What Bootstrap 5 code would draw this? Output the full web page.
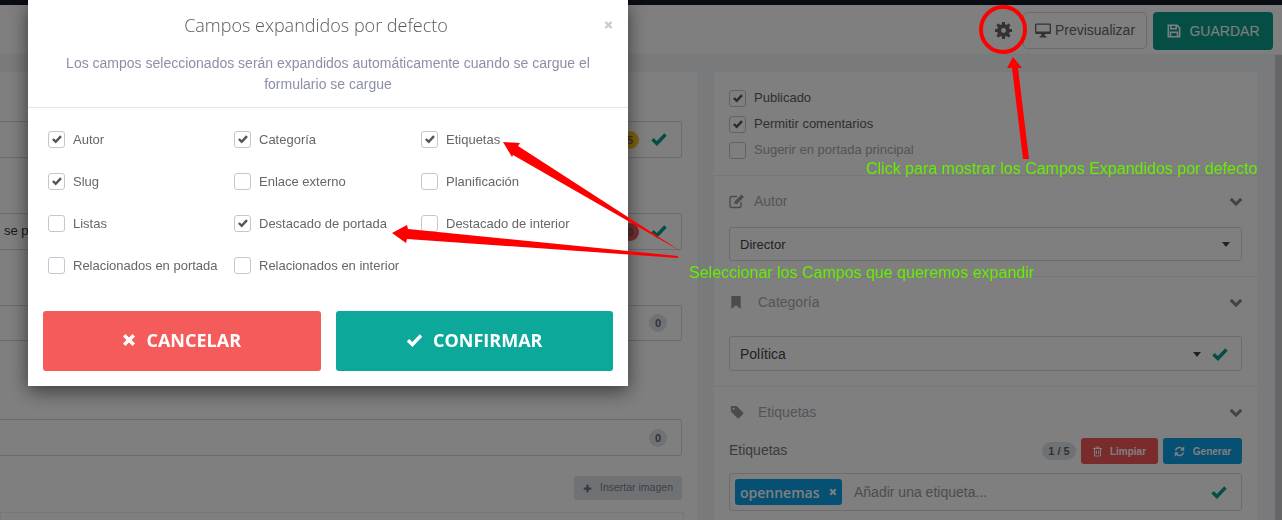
<!DOCTYPE html>
<html lang="es">
<head>
    <meta charset="UTF-8">
    <meta name="viewport" content="width=device-width, initial-scale=1.0">
    <title>Campos expandidos por defecto</title>
    <link rel="stylesheet" href="https://cdn.jsdelivr.net/npm/bootstrap@5.3.3/dist/css/bootstrap.min.css">
    <style>
        html, body { height: 100%; overflow: hidden; }
        body { font-family: "Liberation Sans", Arial, sans-serif; font-size: 13px; color: #5e5e5e; background: #fff; }

        .franja-top { height: 5px; background: #141a28; }
        .cabecera { height: 50px; padding: 7px 9px 5px 0; background: #fff; border-bottom: 1px solid #f0f0f0; }
        .btn-engranaje { width: 24px; margin-right: 8px; color: #666; }
        .btn-previa { width: 124px; height: 37px; margin-right: 6px; padding: 0; font-size: 14px; color: #666; border: 1px solid #d8d8d8; border-radius: 4px; background: #fff; }
        .btn-guardar { width: 120px; height: 38px; padding: 0 0 0 1px; font-size: 14px; color: #fff; background: #0a9c8d; border: 0; border-radius: 4px; }

        .zona { height: 465px; overflow: hidden; }
        .contenido { padding-top: 17px; background: #f0f4f8; }
        .barra-scroll { width: 7px; background: #cdcdcd; }

        .panel-izq { width: 697px; height: 500px; padding: 49px 15px 0 0; margin-right: 17px; background: #fff; }
        .caja { height: 37px; padding: 0 14px 0 4px; color: #333; border: 1px solid #d5d8dc; border-left: 0; border-radius: 0 3px 3px 0; }
        .caja + .caja { margin-top: 55px; }
        .caja.sep-grande { margin-top: 78px; }
        .contador { width: 18px; height: 18px; margin-top: 1px; font-size: 11px; font-weight: 700; line-height: 18px; text-align: center; color: #666; background: #dfe4ea; border-radius: 50%; }
        .cont-amarillo { margin-right: 12px; background: #fac420; }
        .cont-rojo { margin-right: 12px; background: #f55b5b; }
        .ok-verde { color: #0a9c8d; }
        .btn-insertar { width: 108px; height: 24px; margin: 20px 0 12px auto; padding: 0; font-size: 10.5px; color: #7a8088; background: #dfe4ea; border: 0; border-radius: 3px; }
        .caja-baja { height: 60px; margin-right: -2px; border: 1px solid #eee; }

        .panel-der { width: 543px; height: 500px; background: #fff; }
        .bloque { padding: 12px 15px 15px; border-bottom: 1px solid #eee; }
        .bloque-checks { padding-top: 13px; padding-bottom: 12px; }
        .fila-check { height: 26px; font-size: 13px; margin: 0; padding: 0; min-height: 0; }
        .fila-check .form-check-label { margin-left: 8px; }
        .texto-apagado { color: #a8a8a8; }
        .cab-bloque { height: 26px; font-size: 14px; color: #a6aab4; }
        .titulo-bloque { width: 25px; color: #999; }
        .titulo-ancho { width: 29px; padding-left: 1px; }
        .chevron { color: #888; margin-right: -1px; }
        .selector { height: 34px; padding: 1px 11px 0 10px; color: #444; border: 1px solid #d5d8dc; border-radius: 3px; margin-top: 13px; }
        .selector-grande { height: 35px; margin-top: 21px; padding-right: 13px; font-size: 14px; }
        .selector-grande .punta { margin-right: 11px; }
        .fila-etiquetas { height: 26px; margin-top: 13px; font-size: 14px; color: #777; }
        .fila-etiquetas .nombre-campo { padding-bottom: 2px; }
        .cuenta { width: 34px; height: 18px; margin-right: 5px; font-size: 11px; font-weight: 700; line-height: 18px; text-align: center; color: #666; background: #dfe4ea; border-radius: 9px; }
        .btn-mini { height: 26px; padding: 0; font-size: 10px; font-weight: 700; color: #fff; border: 0; border-radius: 3px; }
        .btn-limpiar { width: 77px; margin-right: 5px; background: #f55757; }
        .btn-generar { width: 79px; background: #0aa0e6; }
        .caja-tags { height: 38px; margin-top: 9px; padding: 0 14px 0 5px; border: 1px solid #d5d8dc; border-radius: 3px; font-size: 14px; color: #999; }
        .chip { width: 107px; height: 26px; margin-right: 12px; padding: 0 5px; font-family: "Open Sans", sans-serif; font-size: 14px; font-weight: 600; color: #fff; background: #0aa0e6; border-radius: 3px; }

        /* modal */
        .modal-dialog.dialogo { width: 600px; max-width: 600px; margin: 0 0 0 28px; }
        .dialogo .modal-content { height: 386px; border: 0; border-radius: 0; box-shadow: 0 5px 18px rgba(0,0,0,.55); }
        .cab-modal { height: 108px; padding: 13px 0 0; border-bottom: 1px solid #e5e5e5; }
        .tit-modal { height: 24px; font-family: "Open Sans", sans-serif; font-size: 18px; font-weight: 300; line-height: 24px; color: #5a5a5a; }
        .cerrar { width: 24px; padding: 0 15px 0 0; color: #ccc; background: none; border: 0; line-height: 24px; }
        .desc-modal { margin: 16px 30px 0; font-size: 14px; line-height: 21px; color: #8c90a6; text-align: center; }
        .rejilla { display: grid; grid-template-columns: 186px 187px 1fr; grid-auto-rows: 42px; padding: 10px 20px 0; height: 203px; }
        .rejilla .form-check { display: flex; align-items: center; margin: 0; padding: 0; min-height: 0; font-size: 13px; color: #666; }
        .rejilla .form-check-label { margin-left: 8px; padding-top: 2px; }
        .pie-modal { gap: 15px; padding: 0 15px 15px; }
        .btn-accion { flex: 1; height: 60px; padding: 0 0 2px; font-family: "Open Sans", sans-serif; font-size: 18px; font-weight: 700; color: #fff; border: 0; border-radius: 3px; gap: 10px; }
        .btn-cancelar { background: #f55b5b; }
        .btn-confirmar { background: #0ca89a; }

        .form-check-input.marca { float: none; flex: none; width: 17px; height: 17px; margin: 0; border: 1px solid #c4c6d2; border-radius: 3px; background-color: #fff; }
        .form-check-input.marca:checked { background-color: #fff; border-color: #c4c6d2; background-size: 12px 12px; background-image: url("data:image/svg+xml,%3csvg xmlns='http://www.w3.org/2000/svg' viewBox='0 0 16 16'%3e%3cpath fill='none' stroke='%23555' stroke-width='3.2' d='M2.5 8l3.8 3.8 7-7.6'/%3e%3c/svg%3e"); }

        /* anotaciones encima de la captura */
        .capa-notas { position: fixed; top: 0; left: 0; width: 1282px; height: 520px; z-index: 1060; pointer-events: none; }
        .capa-notas svg { position: absolute; top: 0; left: 0; }
        .nota-verde { position: absolute; font-size: 16px; line-height: 20px; color: #66ee00; white-space: nowrap; }
        #nota-gear { left: 866px; top: 159px; }
        #nota-campos { left: 689px; top: 263px; }
    </style>
</head>
<body>

<svg width="0" height="0" class="d-block">
    <symbol id="i-check" viewBox="0 0 16 16"><path fill="none" stroke="currentColor" stroke-width="3.4" d="M1.5 8.2l4.4 4.3 8.6-9"/></symbol>
    <symbol id="i-x" viewBox="0 0 16 16"><path fill="none" stroke="currentColor" stroke-width="4" d="M2.5 2.5l11 11M13.5 2.5l-11 11"/></symbol>
    <symbol id="i-gear" viewBox="0 0 16 16"><circle cx="8" cy="8" r="4.2" fill="none" stroke="currentColor" stroke-width="3.8"/><path stroke="currentColor" stroke-width="2.9" d="M8 0v3M8 13v3M0 8h3M13 8h3M2.3 2.3l2.2 2.2M11.5 11.5l2.2 2.2M13.7 2.3l-2.2 2.2M4.5 11.5l-2.2 2.2"/></symbol>
    <symbol id="i-monitor" viewBox="0 0 18 16"><path fill="currentColor" fill-rule="evenodd" d="M1.5 0h15A1.5 1.5 0 0 1 18 1.5v9a1.5 1.5 0 0 1-1.5 1.5H11v2l2 1v1H5v-1l2-1v-2H1.5A1.5 1.5 0 0 1 0 10.5v-9A1.5 1.5 0 0 1 1.5 0zM1.5 1.5V9h15V1.500z"/></symbol>
    <symbol id="i-save" viewBox="0 0 16 16"><path fill="none" stroke="currentColor" stroke-width="1.8" d="M1.5 1.5h10l3 3v10h-13zM4.5 1.5v4h6v-4M4 14.5v-5h8v5"/></symbol>
    <symbol id="i-edit" viewBox="0 0 16 16"><path fill="none" stroke="currentColor" stroke-width="1.4" d="M12 9v4a1.5 1.5 0 0 1-1.5 1.5h-8A1.5 1.5 0 0 1 1 13V5a1.5 1.5 0 0 1 1.5-1.5H8"/><path fill="currentColor" d="M5.5 8.5l7-7L15 4l-7 7H5.500z"/></symbol>
    <symbol id="i-bookmark" viewBox="0 0 12 16"><path fill="currentColor" d="M1 1h10v14l-5-4-5 4z"/></symbol>
    <symbol id="i-tag" viewBox="0 0 16 16"><path fill="currentColor" fill-rule="evenodd" d="M1 1h6.5L15 8.5a1.2 1.2 0 0 1 0 1.7L10.200 15a1.200 1.200 0 0 1-1.700 0L1 7.500zM4 3a1.200 1.200 0 1 0 .01 0z"/></symbol>
    <symbol id="i-chev" viewBox="0 0 16 10"><path fill="none" stroke="currentColor" stroke-width="3.4" d="M2 2l6 6 6-6"/></symbol>
    <symbol id="i-caret" viewBox="0 0 8 5"><path fill="currentColor" d="M0 0h8L4 5z"/></symbol>
    <symbol id="i-plus" viewBox="0 0 12 12"><path stroke="currentColor" stroke-width="3" d="M6 1v10M1 6h10"/></symbol>
    <symbol id="i-trash" viewBox="0 0 12 14"><path fill="none" stroke="currentColor" stroke-width="1.3" d="M0 3h12M4 3V1h4v2M2 3v10h8V3M4.5 5.500v5M7.500 5.500v5"/></symbol>
    <symbol id="i-refresh" viewBox="0 0 14 14"><path fill="none" stroke="currentColor" stroke-width="2" d="M2 6a5 5 0 0 1 9-2M12 8a5 5 0 0 1-9 2"/><path fill="currentColor" d="M13 0v6H8zM1 14V8h5z"/></symbol>
</svg>

<div class="franja-top"></div>

<div class="cabecera d-flex justify-content-end align-items-start">
    <div class="btn-engranaje d-flex justify-content-center align-self-center">
        <svg width="17" height="17"><use href="#i-gear"/></svg>
    </div>
    <button type="button" class="btn btn-previa d-flex align-items-center justify-content-center gap-1">
        <svg width="16" height="15"><use href="#i-monitor"/></svg>Previsualizar
    </button>
    <button type="button" class="btn btn-guardar d-flex align-items-center justify-content-center gap-2">
        <svg width="14" height="14"><use href="#i-save"/></svg>GUARDAR
    </button>
</div>

<div class="zona d-flex">
    <div class="contenido flex-grow-1 d-flex">
        <div class="panel-izq d-flex flex-column">
            <div class="caja d-flex align-items-center justify-content-end">
                <div class="contador cont-amarillo">5</div>
                <svg class="ok-verde" width="16" height="16"><use href="#i-check"/></svg>
            </div>
            <div class="caja d-flex align-items-center">
                <span class="flex-grow-1">se p</span>
                <div class="contador cont-rojo">0</div>
                <svg class="ok-verde" width="16" height="16"><use href="#i-check"/></svg>
            </div>
            <div class="caja d-flex align-items-center justify-content-end">
                <div class="contador">0</div>
            </div>
            <div class="caja sep-grande d-flex align-items-center justify-content-end">
                <div class="contador">0</div>
            </div>
            <button type="button" class="btn btn-insertar d-flex align-items-center justify-content-center gap-2 flex-shrink-0">
                <svg width="9" height="9" class="text-secondary"><use href="#i-plus"/></svg>Insertar imagen
            </button>
            <div class="caja-baja flex-shrink-0"></div>
        </div>

        <div class="panel-der">
            <div class="bloque bloque-checks">
                <div class="form-check fila-check d-flex align-items-center">
                    <input class="form-check-input marca" type="checkbox" id="c-pub" checked>
                    <label class="form-check-label" for="c-pub">Publicado</label>
                </div>
                <div class="form-check fila-check d-flex align-items-center">
                    <input class="form-check-input marca" type="checkbox" id="c-com" checked>
                    <label class="form-check-label" for="c-com">Permitir comentarios</label>
                </div>
                <div class="form-check fila-check d-flex align-items-center">
                    <input class="form-check-input marca" type="checkbox" id="c-sug">
                    <label class="form-check-label texto-apagado" for="c-sug">Sugerir en portada principal</label>
                </div>
            </div>
            <div class="bloque">
                <div class="cab-bloque d-flex align-items-center">
                    <div class="titulo-bloque"><svg width="16" height="16" class="d-block"><use href="#i-edit"/></svg></div>
                    <span class="flex-grow-1">Autor</span>
                    <svg class="chevron" width="14" height="9"><use href="#i-chev"/></svg>
                </div>
                <div class="selector d-flex align-items-center justify-content-between">
                    <span>Director</span>
                    <svg width="8" height="5"><use href="#i-caret"/></svg>
                </div>
            </div>
            <div class="bloque">
                <div class="cab-bloque d-flex align-items-center">
                    <div class="titulo-bloque titulo-ancho"><svg width="12" height="15" class="d-block"><use href="#i-bookmark"/></svg></div>
                    <span class="flex-grow-1">Categoría</span>
                    <svg class="chevron" width="14" height="9"><use href="#i-chev"/></svg>
                </div>
                <div class="selector selector-grande d-flex align-items-center">
                    <span class="flex-grow-1">Política</span>
                    <svg width="8" height="5" class="punta"><use href="#i-caret"/></svg>
                    <svg class="ok-verde" width="16" height="16"><use href="#i-check"/></svg>
                </div>
            </div>
            <div class="bloque">
                <div class="cab-bloque d-flex align-items-center">
                    <div class="titulo-bloque titulo-ancho"><svg width="14" height="14" class="d-block"><use href="#i-tag"/></svg></div>
                    <span class="flex-grow-1">Etiquetas</span>
                    <svg class="chevron" width="14" height="9"><use href="#i-chev"/></svg>
                </div>
                <div class="fila-etiquetas d-flex align-items-center">
                    <span class="flex-grow-1 nombre-campo">Etiquetas</span>
                    <div class="cuenta">1 / 5</div>
                    <button type="button" class="btn btn-mini btn-limpiar d-flex align-items-center justify-content-center gap-2">
                        <svg width="9" height="11"><use href="#i-trash"/></svg>Limpiar
                    </button>
                    <button type="button" class="btn btn-mini btn-generar d-flex align-items-center justify-content-center gap-2">
                        <svg width="11" height="11"><use href="#i-refresh"/></svg>Generar
                    </button>
                </div>
                <div class="caja-tags d-flex align-items-center">
                    <div class="chip d-flex align-items-center justify-content-between">
                        opennemas
                        <svg width="8" height="8"><use href="#i-x"/></svg>
                    </div>
                    <span class="flex-grow-1">Añadir una etiqueta...</span>
                    <svg class="ok-verde" width="16" height="16"><use href="#i-check"/></svg>
                </div>
            </div>
        </div>
    </div>
    <div class="barra-scroll"></div>
</div>

<div class="modal-backdrop show"></div>

<div class="modal d-block" tabindex="-1">
    <div class="modal-dialog dialogo">
        <div class="modal-content">
            <div class="cab-modal">
                <div class="d-flex">
                    <div class="tit-modal flex-grow-1 text-center">Campos expandidos por defecto</div>
                    <button type="button" class="cerrar d-flex align-items-center justify-content-end" data-bs-dismiss="modal">
                        <svg width="10" height="10"><use href="#i-x"/></svg>
                    </button>
                </div>
                <p class="desc-modal">Los campos seleccionados serán expandidos automáticamente cuando se cargue el formulario se cargue</p>
            </div>
            <div class="rejilla">
                <div class="form-check"><input class="form-check-input marca" type="checkbox" id="m1" checked><label class="form-check-label" for="m1">Autor</label></div>
                <div class="form-check"><input class="form-check-input marca" type="checkbox" id="m2" checked><label class="form-check-label" for="m2">Categoría</label></div>
                <div class="form-check"><input class="form-check-input marca" type="checkbox" id="m3" checked><label class="form-check-label" for="m3">Etiquetas</label></div>
                <div class="form-check"><input class="form-check-input marca" type="checkbox" id="m4" checked><label class="form-check-label" for="m4">Slug</label></div>
                <div class="form-check"><input class="form-check-input marca" type="checkbox" id="m5"><label class="form-check-label" for="m5">Enlace externo</label></div>
                <div class="form-check"><input class="form-check-input marca" type="checkbox" id="m6"><label class="form-check-label" for="m6">Planificación</label></div>
                <div class="form-check"><input class="form-check-input marca" type="checkbox" id="m7"><label class="form-check-label" for="m7">Listas</label></div>
                <div class="form-check"><input class="form-check-input marca" type="checkbox" id="m8" checked><label class="form-check-label" for="m8">Destacado de portada</label></div>
                <div class="form-check"><input class="form-check-input marca" type="checkbox" id="m9"><label class="form-check-label" for="m9">Destacado de interior</label></div>
                <div class="form-check"><input class="form-check-input marca" type="checkbox" id="m10"><label class="form-check-label" for="m10">Relacionados en portada</label></div>
                <div class="form-check"><input class="form-check-input marca" type="checkbox" id="m11"><label class="form-check-label" for="m11">Relacionados en interior</label></div>
            </div>
            <div class="pie-modal d-flex">
                <button type="button" class="btn btn-accion btn-cancelar d-flex align-items-center justify-content-center">
                    <svg width="14" height="14"><use href="#i-x"/></svg>CANCELAR
                </button>
                <button type="button" class="btn btn-accion btn-confirmar d-flex align-items-center justify-content-center">
                    <svg width="17" height="16"><use href="#i-check"/></svg>CONFIRMAR
                </button>
            </div>
        </div>
    </div>
</div>

<div class="capa-notas">
    <svg width="1282" height="520" viewBox="0 0 1282 520">
        <ellipse cx="1003" cy="29.5" rx="22" ry="22.5" fill="none" stroke="#f00" stroke-width="4"/>
        <polygon fill="#f00" points="1013,57 1022,68 1018,68 1029,159 1023,159 1012,68 1007,68"/>
        <polygon fill="#f00" points="503,142 520,143 518,146 682,252 513,155 512,157"/>
        <polygon fill="#f00" points="392,233 407,225 408,229 678,256 678,258 407,239 406,243"/>
    </svg>
    <span class="nota-verde" id="nota-gear">Click para mostrar los Campos Expandidos por defecto</span>
    <span class="nota-verde" id="nota-campos">Seleccionar los Campos que queremos expandir</span>
</div>

<script src="https://cdn.jsdelivr.net/npm/bootstrap@5.3.3/dist/js/bootstrap.bundle.min.js"></script>
</body>
</html>
